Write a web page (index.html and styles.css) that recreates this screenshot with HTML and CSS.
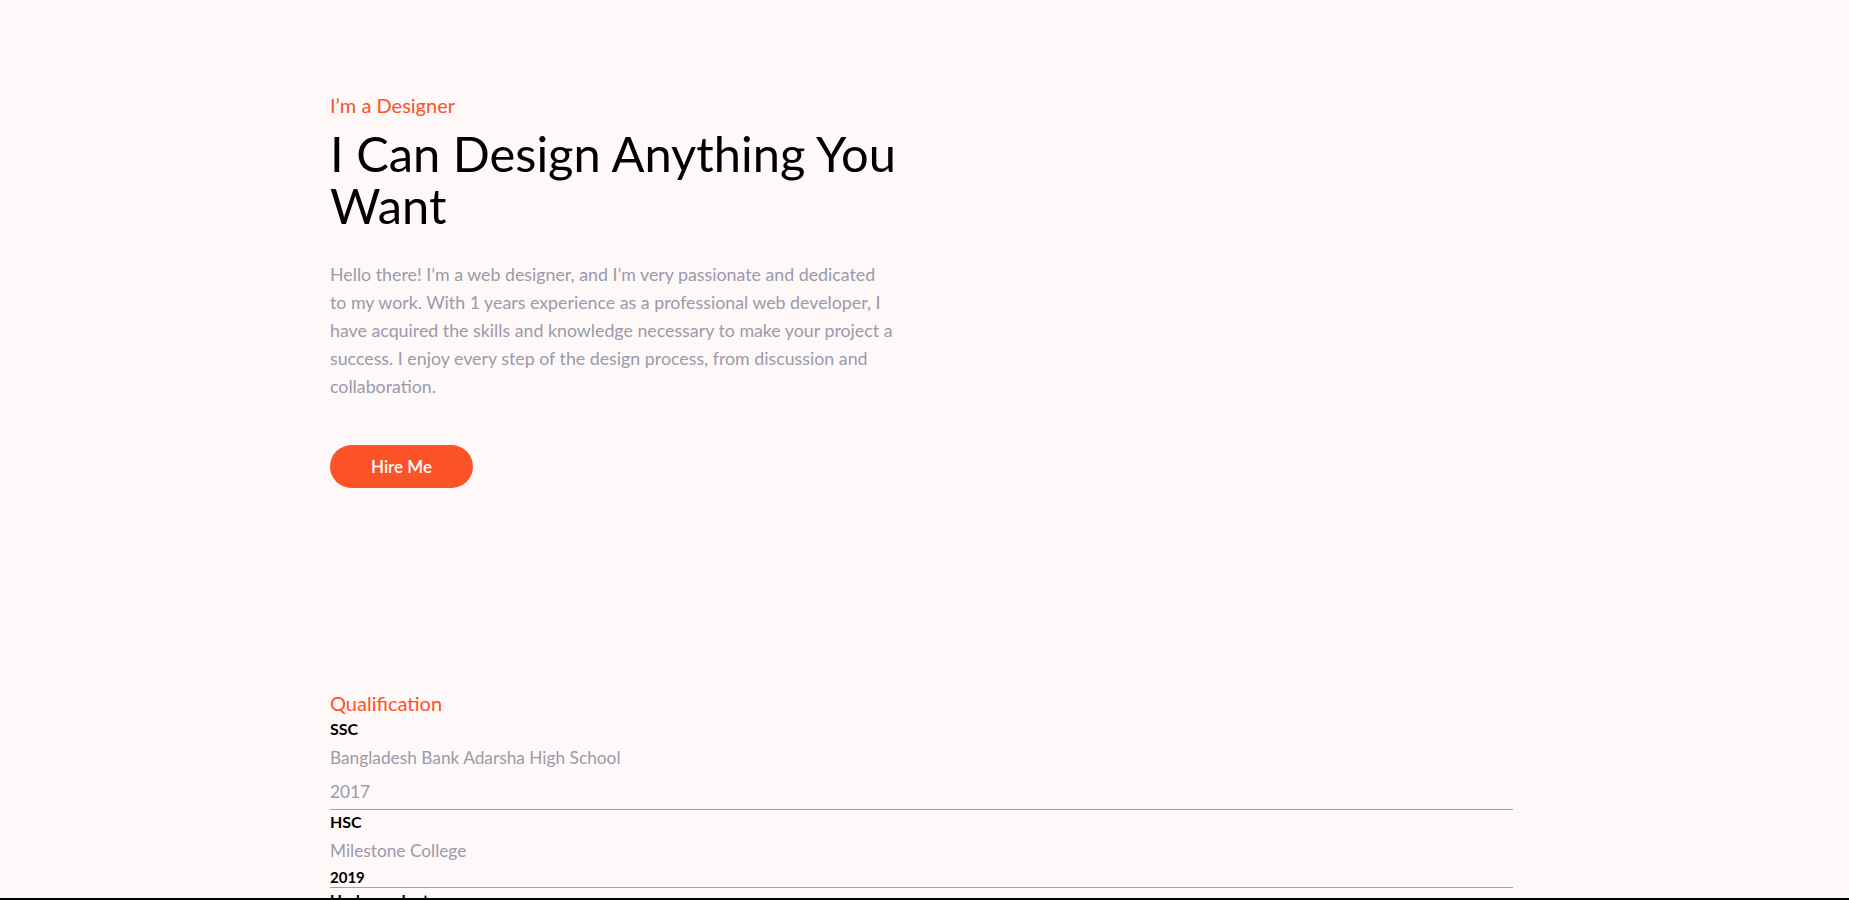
FILE: index.html
```html
<!DOCTYPE html>
<html lang="en">
<head>
<meta charset="utf-8">
<title>Designer</title>
<link rel="stylesheet" href="styles.css">
</head>
<body>
<main class="container">
  <section class="hero">
    <p class="eyebrow">I’m a Designer</p>
    <h1 class="title">I Can Design Anything You Want</h1>
    <p class="intro">Hello there! I’m a web designer, and I’m very passionate and dedicated<br>
    to my work. With 1 years experience as a professional web developer, I<br>
    have acquired the skills and knowledge necessary to make your project a<br>
    success. I enjoy every step of the design process, from discussion and<br>
    collaboration.</p>
    <a class="btn" href="#">Hire Me</a>
  </section>
  <section class="qual">
    <h2 class="qual-title">Qualification</h2>
    <div class="item">
      <h4 class="degree">SSC</h4>
      <p class="school">Bangladesh Bank Adarsha High School</p>
      <p class="year">2017</p>
    </div>
    <div class="item">
      <h4 class="degree">HSC</h4>
      <p class="school">Milestone College</p>
      <p class="year year-bold">2019</p>
    </div>
    <div class="item">
      <h4 class="degree">Undergraduate</h4>
      <p class="school">University</p>
    </div>
  </section>
</main>
<div class="bottom-bar"></div>
</body>
</html>
```

FILE: styles.css
```css
* { box-sizing: border-box; }
html, body { margin: 0; padding: 0; }
body {
  background: #fff8f8;
  font-family: "Lato", "Open Sans", sans-serif;
  color: #000;
  overflow: hidden;
  height: 900px;
}
.container {
  width: 1189px;
  margin: 0 auto;
}
.hero {
  padding-top: 93px;
}
.eyebrow {
  margin: 0;
  font-size: 20px;
  line-height: 24px;
  color: #fb5227;
}
.title {
  margin: 10px 0 0;
  width: 620px;
  font-size: 48.8px;
  line-height: 52px;
  font-weight: 400;
  color: #000;
}
.intro {
  margin: 29px 0 0;
  width: 620px;
  font-size: 17.8px;
  line-height: 28px;
  color: #9a9aab;
}
.btn {
  display: inline-flex;
  align-items: center;
  justify-content: center;
  margin-top: 45px;
  width: 143px;
  height: 43px;
  border-radius: 22px;
  background: #fb5227;
  color: #fff;
  font-size: 17px;
  font-weight: 600;
  text-decoration: none;
}
.qual {
  margin-top: 203px;
}
.qual-title {
  margin: 0;
  font-size: 20px;
  line-height: 24px;
  font-weight: 400;
  color: #fb5227;
}
.item {
  margin-right: 6px;
  border-bottom: 1px solid #a3a3a3;
}
.degree {
  margin: 4px 0 0;
  font-size: 16px;
  line-height: 20px;
  font-weight: 700;
}
.item + .item .degree { margin-top: 2px; }
.school {
  margin: 5px 0 0;
  font-size: 17.3px;
  line-height: 28px;
  color: #9a9aab;
}
.year {
  margin: 6px 0 3px;
  font-size: 17.3px;
  line-height: 28px;
  color: #9a9aab;
}
.year-bold {
  margin: 3px 0 1px;
  font-size: 15px;
  line-height: 18px;
  font-weight: 700;
  color: #000;
}
.bottom-bar {
  position: fixed;
  left: 0;
  right: 0;
  bottom: 0;
  height: 2px;
  background: #000;
}
```
